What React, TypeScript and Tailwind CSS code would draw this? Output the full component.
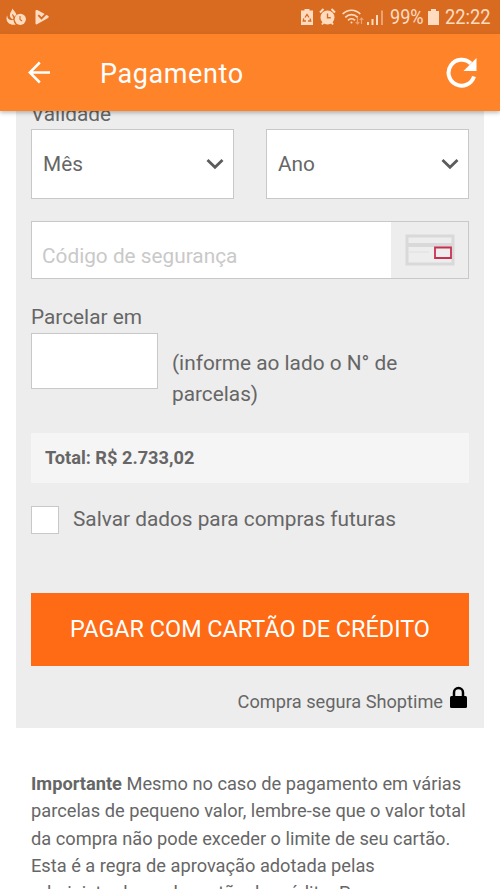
import type { ReactNode } from "react";

function StatusBar() {
  return (
    <div className="flex h-[34px] shrink-0 items-center justify-between bg-[#d96b20] pl-[6px] pr-[9px] text-[#ffdcc0]">
      <div className="flex items-center gap-[8px]">
        <svg width="21" height="18" viewBox="0 0 21 18" fill="currentColor">
          <path d="M6.500 .5c.8 2 3.500 3.500 4 6.500-2 .8-3.300 2.500-3.500 4.500C4.500 10.500 3.500 8.500 4 6c.3-1.500 2-3.300 2.500-5.500z" />
          <path d="M1.200 7.500c0 3 2 5.300 6.300 4.500.3 1.800.6 3.200 2.200 4.700C4 17.500.5 14.500.5 10.500c0-1.200.2-2.200.7-3z" />
          <path d="M6.300 6.500c1 .8 1.400 1.800 1.200 3" stroke="#d96b20" strokeWidth="1.200" fill="none" />
          <circle cx="14.300" cy="11.300" r="5.600" />
          <path d="M14 8v3.500l2 1.500" stroke="#d96b20" strokeWidth="1.100" fill="none" />
        </svg>
        <svg width="15" height="17" viewBox="0 0 15 17" fill="currentColor">
          <path d="M1.300 1h1L13 6.800c1 .6 1 1.500 0 2.100L2 15.300c-.8.400-1.500 0-1.500-.8V2c0-.6.300-1 .8-1z" />
          <path d="M3.300 6.200l3.200 3.200 6-6" stroke="#d96b20" strokeWidth="1.900" fill="none" />
        </svg>
      </div>

      <div className="flex items-center">
        <svg width="12" height="18" viewBox="0 0 12 18" fill="currentColor">
          <path d="M3.500 1h5v1.500H12V17H0V2.500h3.500z" />
          <path d="M4 9.500L6 6.500l2 3M2.800 10.500L2.200 13h2.800M7 13h2.800l-.8-2.500" stroke="#d96b20" strokeWidth="1.300" fill="none" />
        </svg>
        <svg className="ml-[6px]" width="17" height="18" viewBox="0 0 17 18" fill="currentColor">
          <circle cx="8.500" cy="9.500" r="7" />
          <path d="M1 4.500L4.500 1M16 4.500L12.500 1M3 16.500l1.500-2M14 16.500l-1.500-2" stroke="currentColor" strokeWidth="2" />
          <path d="M8.500 5.500v4.200h3.300" stroke="#d96b20" strokeWidth="1.400" fill="none" />
        </svg>
        <svg className="ml-[6px]" width="23" height="18" viewBox="0 0 23 18" fill="none" stroke="currentColor" strokeWidth="1.700">
          <path d="M.7 6c5-5 12.600-5 17.600 0M3.300 9.300c3.700-3.500 8.700-3.500 12.400 0M6 12.300c2-1.900 5-1.900 7 0" />
          <circle cx="9.500" cy="14.600" r="1" fill="currentColor" stroke="none" />
          <path d="M15.500 10v6M13.700 14.200l1.800 1.800 1.800-1.800M19.500 16v-6M17.700 11.800l1.800-1.800 1.800 1.800" strokeWidth="1.200" opacity=".5" />
        </svg>
        <svg className="ml-[2px]" width="17" height="18" viewBox="0 0 17 18" fill="currentColor">
          <path d="M0 14h2v3H0zM4.500 11h2v6h-2zM9 7h2v10H9z" />
          <path d="M14 2.500h2V17h-2z" opacity=".5" />
        </svg>
        <span className="ml-[6px] w-[33px] origin-left scale-x-[.86] whitespace-nowrap text-[21px] leading-none">99%</span>
        <svg className="ml-[5px]" width="11" height="18" viewBox="0 0 11 18" fill="currentColor">
          <path d="M3 1h5v2h3v14H0V3h3z" />
        </svg>
        <span className="ml-[6px] w-[46px] origin-left scale-x-[.87] whitespace-nowrap text-[21px] leading-none">22:22</span>
      </div>
    </div>
  );
}

function AppBar() {
  return (
    <header className="z-10 flex h-[77px] shrink-0 items-center bg-[#ff8429] pl-[28px] pr-[23px] text-white shadow-[0_2px_4px_rgba(0,0,0,0.25)]">
      <svg width="23" height="23" viewBox="0 0 23 23" fill="none" stroke="currentColor" strokeWidth="2.500">
        <path d="M22 11.500H2M11.800 1.500l-10 10 10 10" />
      </svg>
      <h1 className="ml-[49px] mt-[4px] flex-1 text-[27px] leading-none tracking-[.6px]">Pagamento</h1>
      <svg width="31" height="31" viewBox="0 0 31 31">
        <path d="M28 19.500A13 13 0 1 1 24.800 6.500" fill="none" stroke="currentColor" strokeWidth="4" />
        <path d="M30.500 1v13H17.500z" fill="currentColor" />
      </svg>
    </header>
  );
}

function SelectBox({ children }: { children: ReactNode }) {
  return (
    <div className="flex h-[70px] w-[203px] items-center justify-between border border-[#c8c8c8] bg-white pl-[11px] pr-[9px]">
      <span className="mt-[2px] text-[20.800px]">{children}</span>
      <svg width="18" height="12" viewBox="0 0 18 12" fill="none" stroke="#5c5c5c" strokeWidth="2.800">
        <path d="M1.500 2l7.500 7.300L16.500 2" />
      </svg>
    </div>
  );
}

export default function App() {
  return (
    <div className="flex h-[889px] w-[500px] flex-col overflow-hidden bg-white font-['Roboto',sans-serif] text-[#666]">
      <StatusBar />
      <AppBar />

      <main className="min-h-0 flex-1 overflow-hidden">
        {/* card form */}
        <section className="ml-[16px] flex h-[617px] w-[468px] flex-col bg-[#ededed] px-[15px]">
          <p className="-mt-[10px] h-[28px] text-[20.800px] leading-[26px]">Validade</p>
          <div className="flex justify-between">
            <SelectBox>Mês</SelectBox>
            <SelectBox>Ano</SelectBox>
          </div>

          <div className="mt-[22px] flex h-[58px] border border-[#c8c8c8] bg-white">
            <span className="flex-1 pl-[10px] pt-[21px] text-[20.800px] leading-[26px] text-[#c9c9c9]">Código de segurança</span>
            <div className="flex w-[77px] items-center justify-center bg-[#ededed]">
              <svg width="50" height="32" viewBox="0 0 50 32" fill="none">
                <path d="M2 2h46v28H2z" stroke="#d9d9d9" strokeWidth="3" />
                <path d="M2 11h46" stroke="#d9d9d9" strokeWidth="4" />
                <path d="M4 18h20M32 18h12" stroke="#dfdfdf" />
                <path d="M30 13.500h16v10.500H30z" fill="#ededed" stroke="#c9304f" strokeWidth="1.800" />
              </svg>
            </div>
          </div>

          <label className="mt-[23px] h-[31px] text-[20.800px] leading-[30px]">Parcelar em</label>
          <div className="flex">
            <div className="h-[56px] w-[127px] border border-[#c8c8c8] bg-white" />
            <p className="ml-[14px] mt-[15px] h-[62px] whitespace-nowrap text-[20.800px] leading-[31px]">
              (informe ao lado o N° de
              <br />
              parcelas)
            </p>
          </div>

          <div className="mt-[23px] flex h-[50px] items-center bg-[#f5f5f5] pl-[14px] text-[18.200px] font-bold">Total: R$ 2.733,02</div>

          <div className="mt-[23px] flex h-[28px] items-center">
            <div className="h-[28px] w-[28px] border border-[#c8c8c8] bg-white" />
            <span className="ml-[14px] text-[20.800px]">Salvar dados para compras futuras</span>
          </div>

          <button className="mt-[59px] flex h-[73px] items-center justify-center bg-[#ff6a14] text-[23.400px] text-white">
            PAGAR COM CARTÃO DE CRÉDITO
          </button>

          <div className="mt-[20px] flex items-start justify-end">
            <span className="mt-[3px] text-[18.200px] leading-[26px]">Compra segura Shoptime</span>
            <svg className="ml-[7px] mr-[2px]" width="17" height="23" viewBox="0 0 17 23">
              <path d="M4 11V6.500a4.500 4.500 0 0 1 9 0V11" fill="none" stroke="#000" strokeWidth="2.500" />
              <rect y="10" width="17" height="12" rx="1.500" fill="#000" />
            </svg>
          </div>
        </section>

        <p className="ml-[31px] mt-[42px] whitespace-nowrap text-[18.240px] leading-[27.300px]">
          <strong>Importante</strong> Mesmo no caso de pagamento em várias
          <br />
          parcelas de pequeno valor, lembre-se que o valor total
          <br />
          da compra não pode exceder o limite de seu cartão.
          <br />
          Esta é a regra de aprovação adotada pelas
          <br />
          administradoras de cartão de crédito. Para
        </p>
      </main>
    </div>
  );
}
